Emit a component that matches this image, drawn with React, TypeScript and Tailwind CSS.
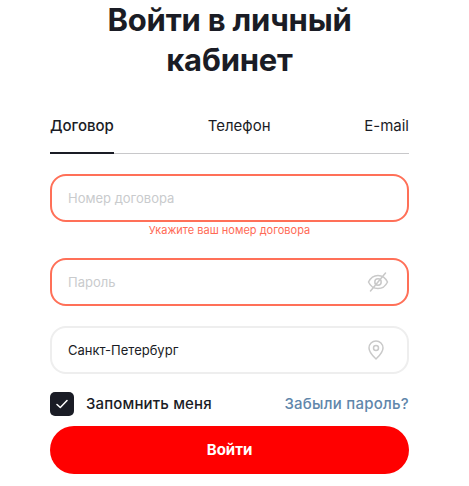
export default function App() {
  return (
    <div className="w-[469px] h-[486px] overflow-hidden bg-white pl-[50px] pr-[60px] text-[#1a1c25] font-['Inter',sans-serif]">
      <h1 className="text-center text-[31px] leading-[40px] font-bold tracking-[-0.2px]">
        Войти в личный<br />кабинет
      </h1>
      <div className="mt-[33px] flex justify-between border-b border-[#c8c8ca] h-[41px] text-[15px] leading-[24px]">
        <div className="h-[41px] w-[64px] border-b-2 border-[#1a1c25] font-medium whitespace-nowrap pt-[1px]">Договор</div>
        <div className="pt-[1px]">Телефон</div>
        <div className="pt-[1px]">E-mail</div>
      </div>
      <div className="mt-[20px] h-[48px] rounded-[16px] border-2 border-[#ff7058] flex items-center pl-[16px] pt-[2px] text-[13px] text-[#c9cbcd]">Номер договора</div>
      <div className="h-[16px] text-center text-[11px] leading-[17px] text-[#ff6a55]">Укажите ваш номер договора</div>
      <div className="mt-[20px] h-[48px] rounded-[16px] border-2 border-[#ff7058] flex items-center justify-between pl-[16px] pr-[18px] text-[13px] text-[#c9cbcd]">
        <span className="pt-[2px]">Пароль</span>
        <svg width="22" height="20" viewBox="0 0 22 20" fill="none" stroke="#c9c9c9" strokeWidth="1.5" strokeLinecap="round" strokeLinejoin="round">
          <path d="M1.500 10c2-4.200 5.300-6.600 9.500-6.600s7.500 2.400 9.500 6.600c-2 4.200-5.300 6.600-9.500 6.600S3.500 14.200 1.500 10Z" />
          <circle cx="11" cy="10" r="3.200" />
          <path d="M3.500 19 18.500 1" />
        </svg>
      </div>
      <div className="mt-[20px] h-[48px] rounded-[16px] border-2 border-[#eeeeee] flex items-center justify-between pl-[16px] pr-[23px] text-[13px] text-[#1a1c25]">
        <span className="pt-[2px]">Санкт-Петербург</span>
        <svg width="16" height="20" viewBox="0 0 16 20" fill="none" stroke="#c9c9c9" strokeWidth="1.500">
          <path d="M8 19c-1-1.200-7-6-7-11a7 7 0 0 1 14 0c0 5-6 9.800-7 11Z" strokeLinejoin="round" />
          <circle cx="8" cy="8" r="2.500" />
        </svg>
      </div>
      <div className="mt-[18px] h-[24px] flex items-center justify-between">
        <div className="flex items-center gap-[12px]">
          <div className="w-[24px] h-[24px] rounded-[5px] bg-[#1a1c25] flex items-center justify-center">
            <svg width="12" height="10" viewBox="0 0 12 10" fill="none" stroke="#ffffff" strokeWidth="1.500" strokeLinecap="round" strokeLinejoin="round">
              <path d="M1 5.500 4.300 8.500 11 1.500" />
            </svg>
          </div>
          <span className="text-[15px] font-medium tracking-[0.15px]">Запомнить меня</span>
        </div>
        <span className="text-[15px] font-medium tracking-[0.25px] text-[#5f86ab]">Забыли пароль?</span>
      </div>
      <div className="mt-[10px] h-[48px] rounded-[24px] bg-[#ff0000] flex items-center justify-center text-white text-[15px] font-bold">Войти</div>
    </div>
  );
}
